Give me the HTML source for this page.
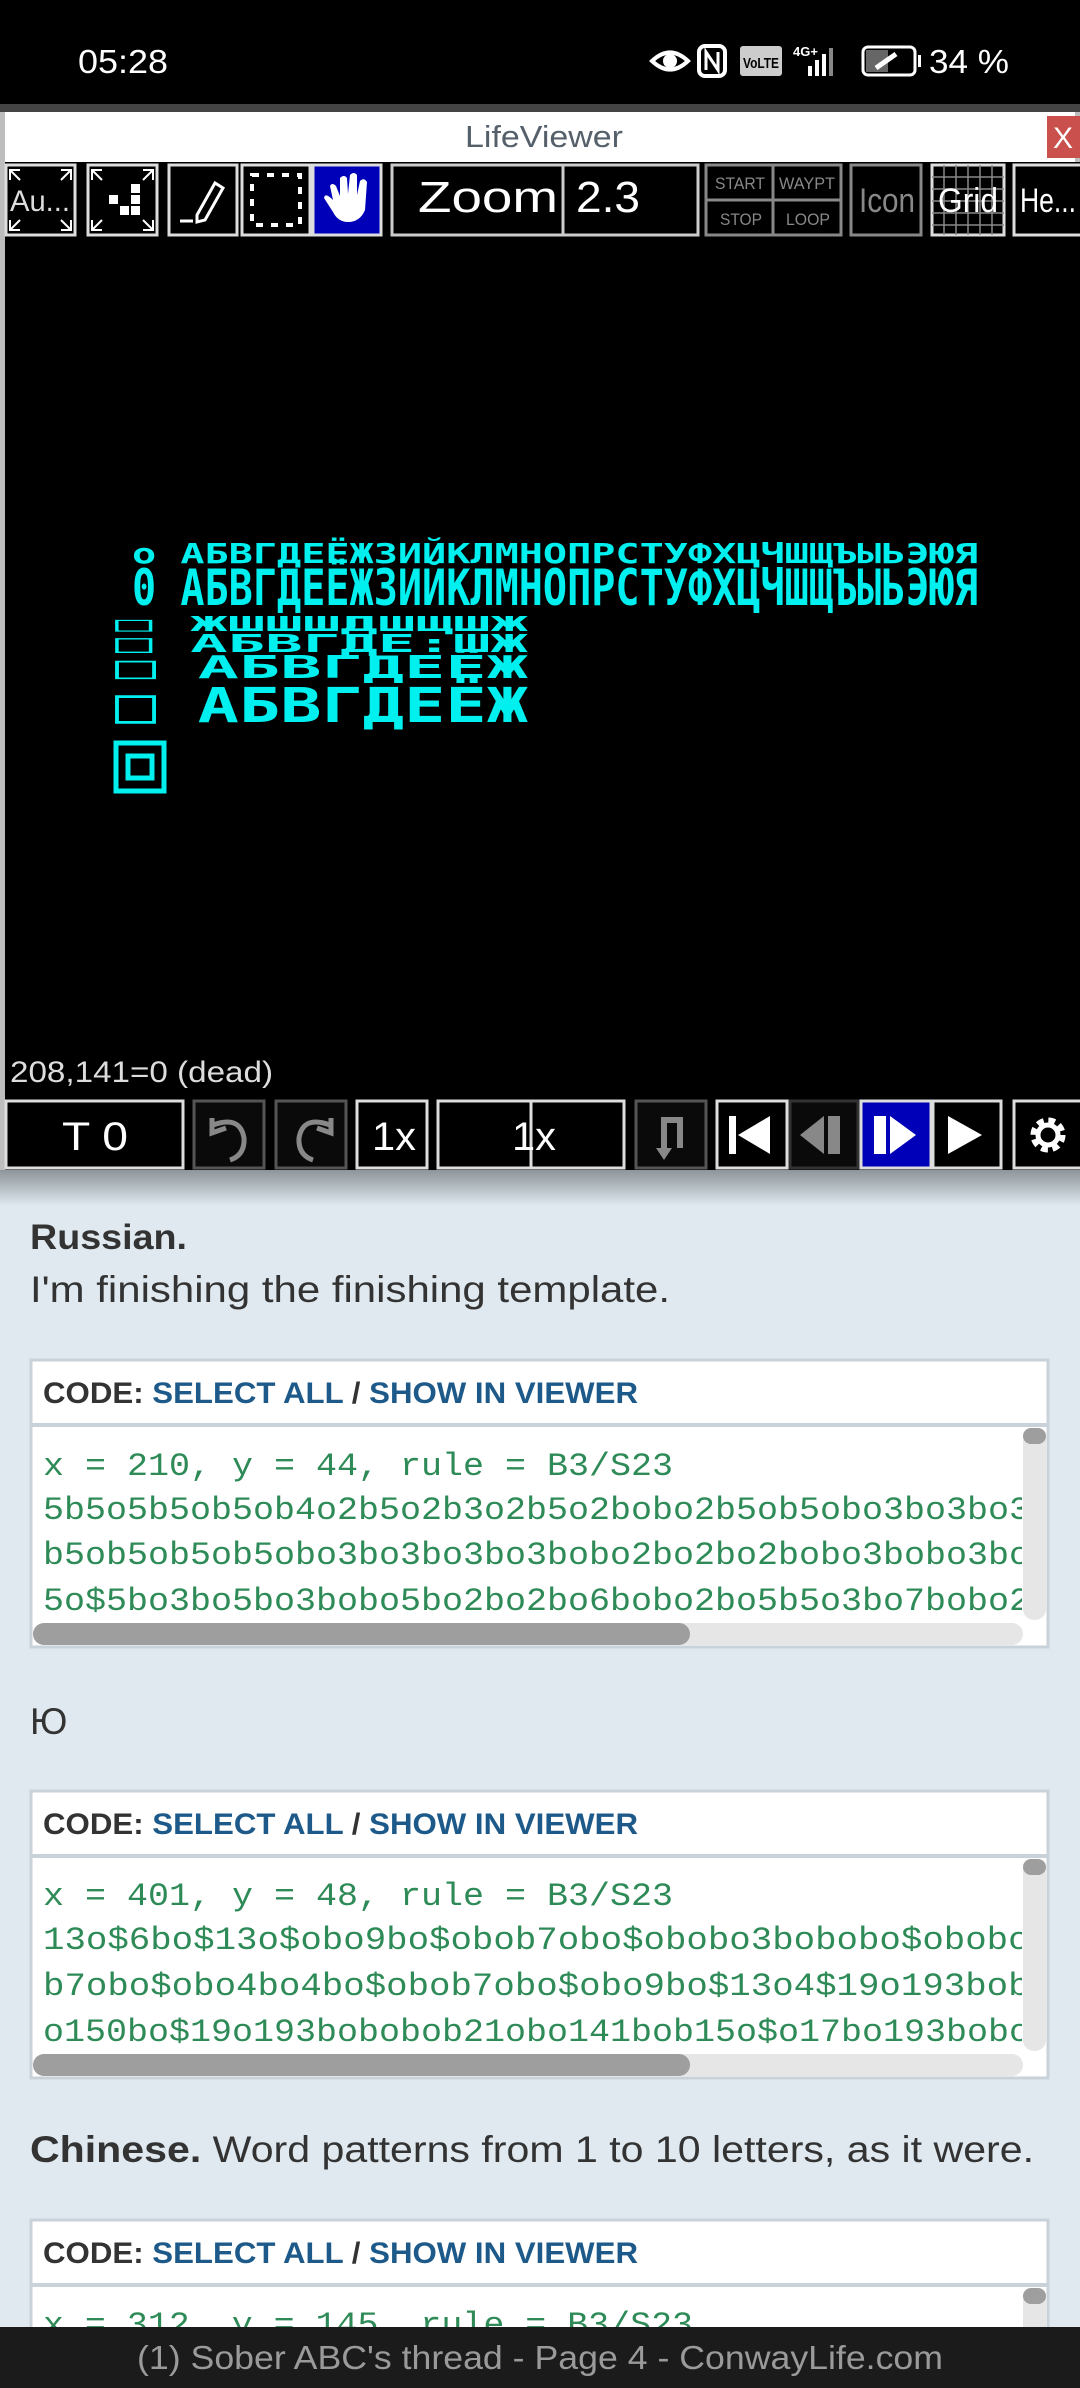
<!DOCTYPE html>
<html><head><meta charset="utf-8"><style>
html,body{margin:0;padding:0;background:#000;}
svg{display:block}
text{font-family:"Liberation Sans","DejaVu Sans",sans-serif}
.m text{font-family:"Liberation Mono","DejaVu Sans Mono",monospace}
.c text{font-family:"DejaVu Sans Mono",monospace}
</style></head><body>
<svg width="1080" height="2388" viewBox="0 0 1080 2388" xmlns="http://www.w3.org/2000/svg">
<defs><linearGradient id="sh" x1="0" y1="0" x2="0" y2="1"><stop offset="0" stop-color="#8e959a"/><stop offset="1" stop-color="#dfe9ef"/></linearGradient></defs>
<rect x="0" y="0" width="1080" height="2388" fill="#dfe9ef"/>
<rect x="0" y="0" width="1080" height="104" fill="#000"/>
<text x="78" y="73" font-size="33" fill="#fff" textLength="90" lengthAdjust="spacingAndGlyphs">05:28</text>
<g fill="none" stroke="#fff" stroke-width="4">
<path d="M652 61 Q670 44 688 61 Q670 78 652 61Z"/><circle cx="670" cy="61" r="5" fill="#fff"/>
<rect x="699" y="46" width="26" height="30" rx="6"/>
</g>
<path d="M706 70 V52 L718 70 V52" stroke="#fff" stroke-width="3" fill="none"/>
<rect x="740" y="46" width="42" height="30" rx="3" fill="#ccc"/>
<text x="743" y="68" font-size="15" font-weight="bold" fill="#000" textLength="36" lengthAdjust="spacingAndGlyphs">VoLTE</text>
<text x="793" y="56" font-size="13" font-weight="bold" fill="#fff">4G+</text>
<rect x="808" y="66" width="4" height="10" fill="#fff"/><rect x="815" y="60" width="4" height="16" fill="#fff"/><rect x="822" y="54" width="4" height="22" fill="#fff"/><rect x="829" y="48" width="4" height="28" fill="#888"/>
<rect x="863" y="47" width="52" height="28" rx="5" fill="none" stroke="#fff" stroke-width="3"/>
<rect x="866" y="50" width="22" height="22" fill="#666"/><rect x="918" y="55" width="3" height="12" fill="#fff"/>
<path d="M876 68 L896 54" stroke="#fff" stroke-width="5"/>
<text x="929" y="73" font-size="33" fill="#fff" textLength="80" lengthAdjust="spacingAndGlyphs">34 %</text>
<rect x="0" y="104" width="1080" height="1072" fill="#bdbdbd"/>
<rect x="0" y="1170" width="1080" height="36" fill="url(#sh)"/>
<rect x="0" y="104" width="1080" height="8" fill="#444"/>
<rect x="5" y="112" width="1070" height="50" fill="#fff"/>
<text x="544" y="147" font-size="31" fill="#55606b" text-anchor="middle" textLength="158" lengthAdjust="spacingAndGlyphs">LifeViewer</text>
<rect x="1047" y="116" width="33" height="42" fill="#c9504c"/>
<text x="1053" y="148" font-size="30" fill="#fff">X</text>
<rect x="5" y="162" width="1075" height="1008" fill="#000"/>
<g stroke-width="3" fill="#000">
<rect x="6" y="165" width="69" height="70" stroke="#ddd"/>
<rect x="88" y="165" width="69" height="70" stroke="#ddd"/>
<rect x="169" y="165" width="68" height="70" stroke="#ddd"/>
<rect x="242" y="165" width="68" height="70" stroke="#ddd"/>
<rect x="313" y="165" width="68" height="70" stroke="#ddd" fill="#0000b8"/>
<rect x="392" y="165" width="306" height="70" stroke="#ccc"/>
<line x1="563" y1="165" x2="563" y2="235" stroke="#ccc"/>
<rect x="706" y="165" width="135" height="70" stroke="#888"/>
<line x1="773" y1="165" x2="773" y2="235" stroke="#888"/><line x1="706" y1="200" x2="841" y2="200" stroke="#888"/>
<rect x="851" y="165" width="70" height="70" stroke="#888"/>
<rect x="932" y="165" width="72" height="70" stroke="#ddd"/>
<rect x="1014" y="165" width="70" height="70" stroke="#ddd"/>
</g>
<g stroke="#888" stroke-width="1.5"><path d="M944 165V235M956 165V235M968 165V235M980 165V235M992 165V235M932 177H1004M932 189H1004M932 201H1004M932 213H1004M932 225H1004"/></g>
<g stroke="#fff" stroke-width="2" fill="none">
<path d="M10 180V170H20M10 170L20 180M71 180V170H61M71 170L61 180M10 220V230H20M10 230L20 220M71 220V230H61M71 230L61 220"/>
<path d="M92 180V170H102M92 170L102 180M153 180V170H143M153 170L143 180M92 220V230H102M92 230L102 220M153 220V230H143M153 230L143 220"/>
</g>
<text x="10" y="211" font-size="30" fill="#ddd" textLength="60" lengthAdjust="spacingAndGlyphs">Au...</text>
<g fill="#fff"><rect x="131" y="184" width="9" height="9"/><rect x="131" y="195" width="9" height="9"/><rect x="109" y="195" width="9" height="9"/><rect x="120" y="206" width="9" height="9"/><rect x="131" y="206" width="9" height="9"/></g>
<path d="M197 215 L215 183 L223 188 L205 220 L197 222Z M180 221H193" stroke="#fff" stroke-width="3" fill="none"/>
<path d="M252 175H300V225H252Z" stroke="#fff" stroke-width="4" stroke-dasharray="7 8" fill="none"/>
<path d="M333 200 L330 186 Q332 182 336 186 L340 196 L340 178 Q344 174 347 178 L348 194 L350 175 Q354 171 357 175 L357 195 L360 181 Q364 177 367 182 L365 210 Q360 222 348 222 Q338 222 333 212 L324 198 Q325 192 333 200Z" fill="#fff"/>
<text x="418" y="212" font-size="44" fill="#fff" textLength="140" lengthAdjust="spacingAndGlyphs">Zoom</text>
<text x="576" y="212" font-size="44" fill="#fff" textLength="64" lengthAdjust="spacingAndGlyphs">2.3</text>
<g fill="#888" font-size="17"><text x="715" y="189" textLength="50" lengthAdjust="spacingAndGlyphs">START</text><text x="779" y="189" textLength="56" lengthAdjust="spacingAndGlyphs">WAYPT</text><text x="720" y="225" textLength="42" lengthAdjust="spacingAndGlyphs">STOP</text><text x="786" y="225" textLength="44" lengthAdjust="spacingAndGlyphs">LOOP</text></g>
<text x="859" y="212" font-size="34" fill="#888" textLength="56" lengthAdjust="spacingAndGlyphs">Icon</text>
<text x="938" y="212" font-size="34" fill="#fff" textLength="60" lengthAdjust="spacingAndGlyphs">Grid</text>
<text x="1020" y="212" font-size="34" fill="#fff" textLength="56" lengthAdjust="spacingAndGlyphs">He...</text>
<g fill="#00f0f0" font-weight="bold" class="c">
<text x="132" y="563" font-size="28" textLength="846" lengthAdjust="spacingAndGlyphs">o АБВГДЕЁЖЗИЙКЛМНОПРСТУФХЦЧШЩЪЫЬЭЮЯ</text>
<text x="132" y="605" font-size="50" textLength="846" lengthAdjust="spacingAndGlyphs">0 АБВГДЕЁЖЗИЙКЛМНОПРСТУФХЦЧШЩЪЫЬЭЮЯ</text>
<text x="115" y="631" font-size="20" textLength="413" lengthAdjust="spacingAndGlyphs">□ ЖШШШДШЩШЖ</text>
<text x="115" y="652" font-size="25" textLength="413" lengthAdjust="spacingAndGlyphs">□ АБВГДЕ:ШЖ</text>
<text x="115" y="678" font-size="31" textLength="413" lengthAdjust="spacingAndGlyphs">□ АБВГДЕЁЖ</text>
<text x="115" y="722" font-size="48" textLength="413" lengthAdjust="spacingAndGlyphs">□ АБВГДЕЁЖ</text>
</g>
<rect x="116" y="743" width="48" height="48" fill="none" stroke="#00f0f0" stroke-width="5"/><rect x="128" y="756" width="24" height="22" fill="none" stroke="#00f0f0" stroke-width="5"/>
<text x="10" y="1082" font-size="30" fill="#ddd" textLength="263" lengthAdjust="spacingAndGlyphs">208,141=0 (dead)</text>
<g stroke-width="3" fill="#000">
<rect x="6" y="1101" width="177" height="67" stroke="#ddd"/>
<rect x="194" y="1101" width="70" height="67" stroke="#555" fill="#0a0a0a"/>
<rect x="276" y="1101" width="70" height="67" stroke="#555" fill="#0a0a0a"/>
<rect x="357" y="1101" width="70" height="67" stroke="#ddd"/>
<rect x="438" y="1101" width="186" height="67" stroke="#ddd"/>
<line x1="531" y1="1101" x2="531" y2="1168" stroke="#ddd"/>
<rect x="636" y="1101" width="70" height="67" stroke="#555" fill="#0a0a0a"/>
<rect x="717" y="1101" width="70" height="67" stroke="#ddd"/>
<rect x="790" y="1101" width="68" height="67" stroke="#333" fill="#0a0a0a"/>
<rect x="861" y="1101" width="70" height="67" stroke="#ddd" fill="#0000b8"/>
<rect x="933" y="1101" width="68" height="67" stroke="#ddd"/>
<rect x="1014" y="1101" width="70" height="67" stroke="#ddd"/>
</g>
<text x="62" y="1150" font-size="40" fill="#fff" textLength="66" lengthAdjust="spacingAndGlyphs">T 0</text>
<path d="M212 1118 L212 1133 L226 1128 M213 1125 Q240 1115 244 1138 Q245 1155 230 1160" stroke="#888" stroke-width="5" fill="none"/>
<path d="M331 1118 L331 1133 L317 1128 M330 1125 Q303 1115 299 1138 Q298 1155 313 1160" stroke="#888" stroke-width="5" fill="none"/>
<text x="372" y="1150" font-size="40" fill="#fff" textLength="44" lengthAdjust="spacingAndGlyphs">1x</text>
<text x="512" y="1150" font-size="40" fill="#fff" textLength="44" lengthAdjust="spacingAndGlyphs">1x</text>
<path d="M664 1152 V1120 H680 V1148" stroke="#888" stroke-width="6" fill="none"/><path d="M656 1148 L672 1148 L664 1160Z" fill="#888"/>
<rect x="729" y="1116" width="7" height="38" fill="#fff"/><path d="M738 1135 L770 1116 V1154Z" fill="#fff"/>
<path d="M800 1135 L824 1116 V1154Z" fill="#888"/><rect x="828" y="1116" width="12" height="38" fill="#888"/>
<rect x="874" y="1116" width="12" height="38" fill="#fff"/><path d="M890 1116 L916 1135 L890 1154Z" fill="#fff"/>
<path d="M948 1116 L982 1135 L948 1154Z" fill="#fff"/>
<circle cx="1048" cy="1135" r="13" fill="none" stroke="#fff" stroke-width="9" stroke-dasharray="6 4.2"/><circle cx="1048" cy="1135" r="10" fill="none" stroke="#fff" stroke-width="5"/>
<text x="30" y="1249" font-size="35" font-weight="bold" fill="#333" textLength="157" lengthAdjust="spacingAndGlyphs">Russian.</text>
<text x="30" y="1302" font-size="37" fill="#333" textLength="640" lengthAdjust="spacingAndGlyphs">I'm finishing the finishing template.</text>
<g id="b1">
<rect x="31" y="1360" width="1017" height="287" fill="#fff" stroke="#c9d2d8" stroke-width="3"/>
<rect x="31" y="1423" width="1017" height="4" fill="#c9d2d8"/>
<text x="43" y="1403" font-size="30" font-weight="bold" fill="#333" textLength="595" lengthAdjust="spacingAndGlyphs"><tspan>CODE: </tspan><tspan fill="#1d5a8a">SELECT ALL</tspan><tspan> / </tspan><tspan fill="#1d5a8a">SHOW IN VIEWER</tspan></text>
<rect x="1023" y="1428" width="23" height="192" rx="11" fill="#e6e6e6"/>
<rect x="1023" y="1428" width="23" height="16" rx="8" fill="#9e9e9e"/>
<rect x="33" y="1623" width="990" height="22" rx="11" fill="#e6e6e6"/>
<rect x="33" y="1623" width="657" height="22" rx="11" fill="#9e9e9e"/>
</g>
<svg x="0" y="0" width="1022" height="2388"><g class="m" font-size="32" fill="#2e8b57">
<text x="43" y="1475" textLength="630" lengthAdjust="spacingAndGlyphs">x = 210, y = 44, rule = B3/S23</text>
<text x="43" y="1519" textLength="1008" lengthAdjust="spacingAndGlyphs">5b5o5b5ob5ob4o2b5o2b3o2b5o2bobo2b5ob5obo3bo3bo3b</text>
<text x="43" y="1564" textLength="1008" lengthAdjust="spacingAndGlyphs">b5ob5ob5ob5obo3bo3bo3bo3bobo2bo2bo2bobo3bobo3bob</text>
<text x="43" y="1610" textLength="1008" lengthAdjust="spacingAndGlyphs">5o$5bo3bo5bo3bobo5bo2bo2bo6bobo2bo5b5o3bo7bobo2b</text>
</g></svg>
<text x="30" y="1734" font-size="37" fill="#333">Ю</text>
<use href="#b1" y="431"/>
<svg x="0" y="0" width="1022" height="2388"><g class="m" font-size="32" fill="#2e8b57">
<text x="43" y="1905" textLength="630" lengthAdjust="spacingAndGlyphs">x = 401, y = 48, rule = B3/S23</text>
<text x="43" y="1949" textLength="1008" lengthAdjust="spacingAndGlyphs">13o$6bo$13o$obo9bo$obob7obo$obobo3bobobo$obobob</text>
<text x="43" y="1995" textLength="1008" lengthAdjust="spacingAndGlyphs">b7obo$obo4bo4bo$obob7obo$obo9bo$13o4$19o193bob2</text>
<text x="43" y="2041" textLength="1008" lengthAdjust="spacingAndGlyphs">o150bo$19o193bobobob21obo141bob15o$o17bo193bobob</text>
</g></svg>
<text x="30" y="2162" font-size="37" fill="#333" textLength="1004" lengthAdjust="spacingAndGlyphs"><tspan font-weight="bold">Chinese.</tspan> Word patterns from 1 to 10 letters, as it were.</text>
<use href="#b1" y="860"/>
<svg x="0" y="0" width="1022" height="2388"><g class="m" font-size="32" fill="#2e8b57">
<text x="43" y="2334" textLength="650" lengthAdjust="spacingAndGlyphs">x = 312, y = 145, rule = B3/S23</text>
</g></svg>
<rect x="0" y="2327" width="1080" height="61" fill="#1b1b1b"/>
<text x="540" y="2369" font-size="33" fill="#9a9a9a" text-anchor="middle" textLength="806" lengthAdjust="spacingAndGlyphs">(1) Sober ABC's thread - Page 4 - ConwayLife.com</text>
</svg>
</body></html>
